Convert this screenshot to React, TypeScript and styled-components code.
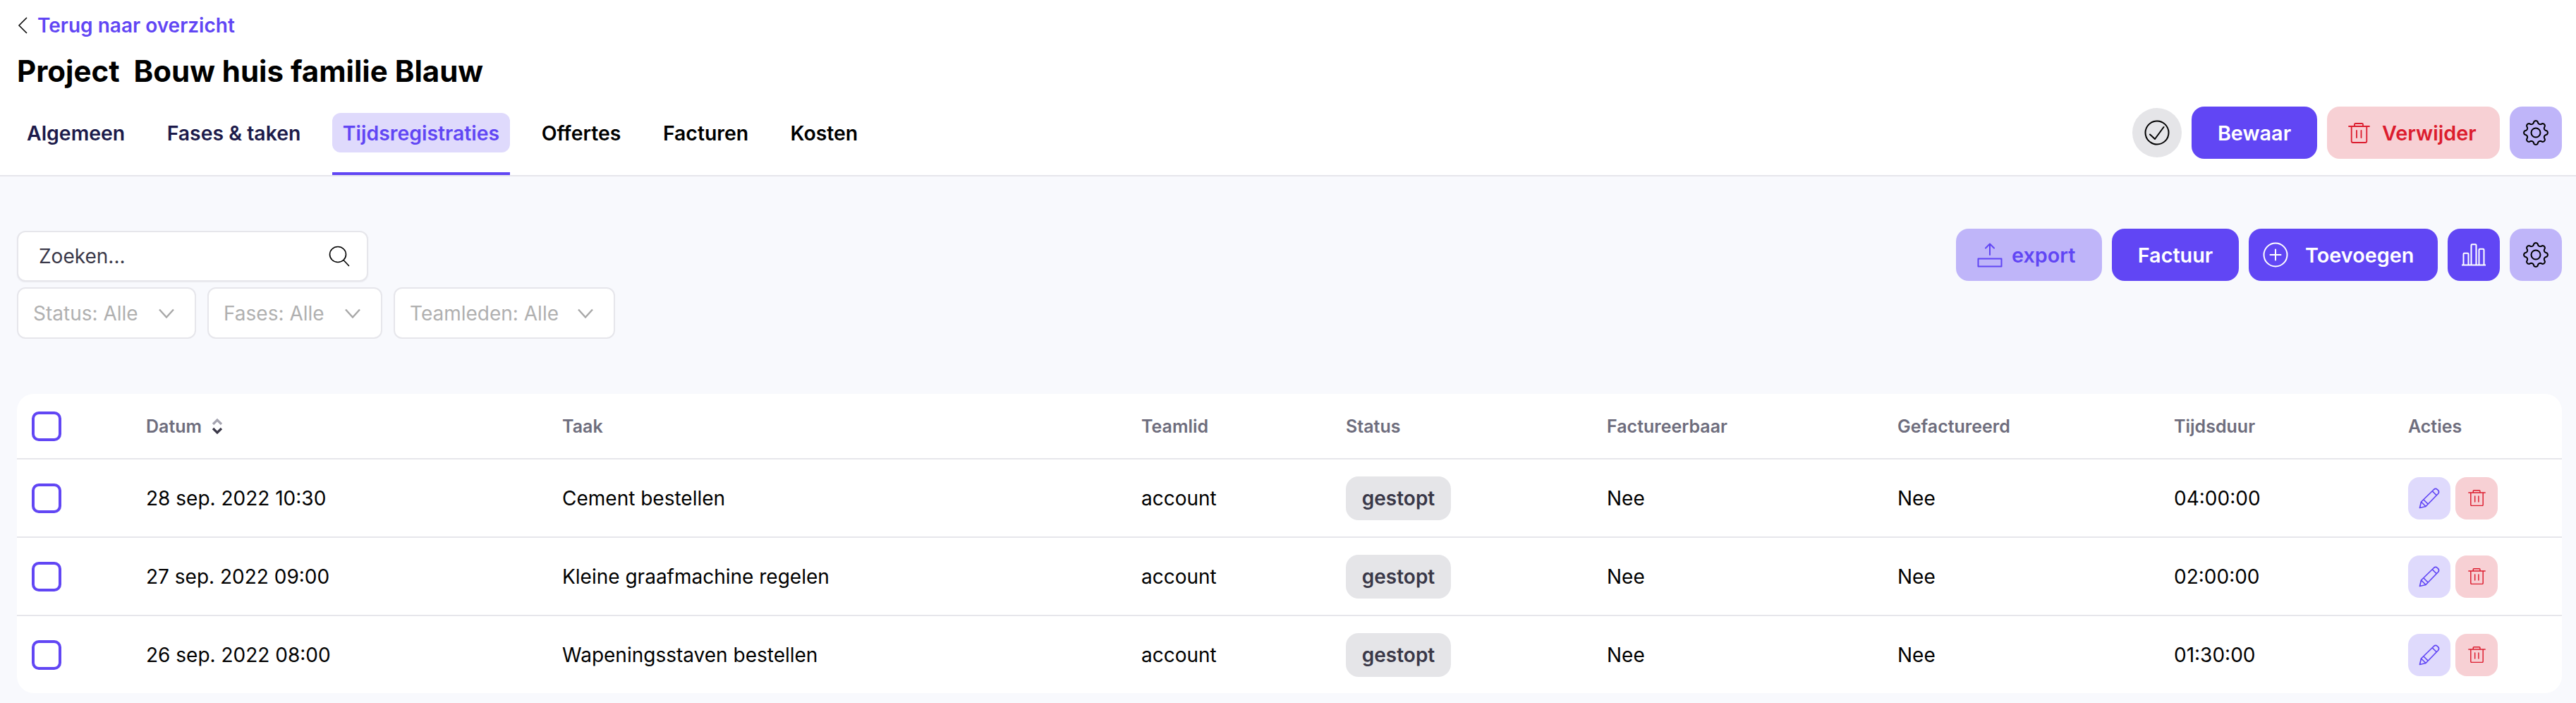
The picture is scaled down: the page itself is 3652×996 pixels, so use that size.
import React from 'react';
import styled, { createGlobalStyle } from 'styled-components';

const GlobalStyle = createGlobalStyle`
    html, body {
        margin: 0;
        padding: 0;
        background: #f8f9fd;
        font-family: Inter, "Noto Sans", sans-serif;
    }
`;

const primary = '#6146f4';
const lavender = '#bfb5f9';
const lilac = '#dfdafc';
const rose = '#f7d0d4';
const red = '#dc1c2e';
const line = '#e6e6eb';

const Page = styled.div`
    width: 3652px;
    height: 996px;
    overflow: hidden;
`;

const Header = styled.header`
    background: #fff;
    height: 248px;
    border-bottom: 2px solid ${line};
    padding: 0 20px 0 24px;
`;

const BackLink = styled.a`
    display: flex;
    align-items: center;
    gap: 13px;
    height: 36px;
    padding-top: 18px;
    color: ${primary};
    font-size: 28px;
    font-weight: 600;
`;

const Title = styled.h1`
    margin: 0;
    padding-top: 24px;
    font-size: 42px;
    line-height: 46px;
    font-weight: 700;
    color: #000;
    white-space: pre;
`;

const HeaderRow = styled.div`
    display: flex;
    justify-content: space-between;
    align-items: center;
    padding-top: 27px;
`;

const Tabs = styled.nav`
    display: flex;
    gap: 29.5px;
    margin-left: -1px;
`;

const Tab = styled.div<{ $active?: boolean; $navy?: boolean }>`
    position: relative;
    height: 56px;
    padding: 0 15px;
    display: flex;
    align-items: center;
    border-radius: 12px;
    font-size: 28.4px;
    font-weight: 600;
    background: ${p => (p.$active ? lilac : 'transparent')};
    color: ${p => (p.$active ? primary : p.$navy ? '#1c1a4a' : '#000')};

    ${p => p.$active && `
        &::after {
            content: '';
            position: absolute;
            left: 0;
            right: 0;
            top: 84px;
            height: 4px;
            background: ${primary};
        }
    `}
`;

const Actions = styled.div`
    display: flex;
    align-items: center;
    gap: 14px;
`;

const StatusDot = styled.div`
    width: 70px;
    height: 70px;
    border-radius: 50%;
    background: #e5e5e8;
    display: flex;
    align-items: center;
    justify-content: center;
`;

const Button = styled.button<{ $w: number; $bg: string; $fg: string }>`
    width: ${p => p.$w}px;
    height: 74px;
    border: 0;
    border-radius: 18px;
    padding: 0;
    display: flex;
    align-items: center;
    justify-content: center;
    font-family: inherit;
    font-size: 28.8px;
    font-weight: 600;
    background: ${p => p.$bg};
    color: ${p => p.$fg};
`;

const IconLabelButton = styled(Button)<{ $left: number; $gap: number }>`
    justify-content: flex-start;
    padding-left: ${p => p.$left}px;
    gap: ${p => p.$gap}px;
`;

const Content = styled.main`
    padding: 77px 20px 0 24px;
`;

const ToolRow = styled.div`
    display: flex;
    justify-content: space-between;
    align-items: flex-start;
`;

const FilterColumn = styled.div`
    display: flex;
    flex-direction: column;
    gap: 8px;
`;

const SearchBox = styled.div`
    box-sizing: border-box;
    width: 498px;
    height: 72px;
    background: #fff;
    border: 2px solid ${line};
    border-radius: 12px;
    padding: 0 24px 0 29px;
    display: flex;
    align-items: center;
    justify-content: space-between;
    font-size: 28px;
    color: #3a3848;
    box-shadow: 0 1px 2px rgba(20, 20, 50, 0.06);
`;

const FilterRow = styled.div`
    display: flex;
    gap: 16px;
`;

const FilterBox = styled.div<{ $w: number }>`
    box-sizing: border-box;
    width: ${p => p.$w}px;
    height: 73px;
    background: #fff;
    border: 2px solid ${line};
    border-radius: 12px;
    padding: 0 29px 0 21px;
    display: flex;
    align-items: center;
    justify-content: space-between;
    font-size: 28px;
    color: #b0b0b0;
`;

const ToolButtons = styled(Actions)`
    margin-top: -3px;
`;

const Card = styled.section`
    margin-top: 78px;
    width: 3608px;
    background: #fff;
    border-radius: 24px;
    overflow: hidden;
`;

const columns = '183px 590px 821px 290px 370px 412px 392px 332px 218px';

const HeadRow = styled.div`
    display: grid;
    grid-template-columns: ${columns};
    align-items: center;
    height: 91px;
    border-bottom: 2px solid ${line};
    font-size: 25px;
    font-weight: 600;
    color: #6e6d7d;
`;

const BodyRow = styled.div`
    display: grid;
    grid-template-columns: ${columns};
    align-items: center;
    height: 109px;
    border-bottom: 2px solid ${line};
    font-size: 28px;
    color: #000;

    &:last-child {
        border-bottom: 0;
    }
`;

const Check = styled.span`
    display: block;
    box-sizing: border-box;
    width: 42px;
    height: 42px;
    margin-left: 21px;
    border: 4px solid ${primary};
    border-radius: 10px;
`;

const SortLabel = styled.div`
    display: flex;
    align-items: center;
    gap: 14px;
`;

const Badge = styled.span`
    display: inline-flex;
    align-items: center;
    justify-content: center;
    width: 149px;
    height: 62px;
    border-radius: 18px;
    background: #e5e5e8;
    color: #3a3848;
    font-size: 28px;
    font-weight: 600;
`;

const RowActions = styled.div`
    display: flex;
    gap: 7px;
`;

const IconButton = styled.button<{ $bg: string }>`
    width: 60px;
    height: 60px;
    border: 0;
    padding: 0;
    border-radius: 16px;
    background: ${p => p.$bg};
    display: flex;
    align-items: center;
    justify-content: center;
`;

// eight rounded teeth, sampled around the circle
const gearPath = (() => {
    const points: string[] = [];
    for (let i = 0; i < 160; i++) {
        const angle = (i / 160) * Math.PI * 2 + Math.PI / 8;
        const wave = Math.cos(angle * 8);
        const shaped = Math.sign(wave) * Math.pow(Math.abs(wave), 0.6);
        const radius = 15 + 1.9 * shaped;
        points.push(`${(18 + radius * Math.cos(angle)).toFixed(2)} ${(18 + radius * Math.sin(angle)).toFixed(2)}`);
    }
    return `M${points.join('L')}Z`;
})();

const GearIcon = () => (
    <svg width="36" height="36" viewBox="0 0 36 36" fill="none" stroke="#000" strokeWidth="2" strokeLinejoin="round">
        <path d={gearPath} />
        <circle cx="18" cy="18" r="6.500" />
    </svg>
);

const TrashIcon = ({ width, color }: { width: number; color: string }) => (
    <svg width={width} height={(width * 29) / 31} viewBox="0 0 31 29" fill="none" stroke={color} strokeWidth="1.800" strokeLinecap="round" strokeLinejoin="round">
        <path d="M1 5h29M9 5V2.300c0-.8.5-1.300 1.300-1.300h9.400c.8 0 1.300.5 1.300 1.300V5M4.700 5v21c0 1.300.8 2 2 2h17.600c1.200 0 2-.7 2-2V5M12 11v10M18.500 11v10" />
    </svg>
);

const PencilIcon = () => (
    <svg width="30" height="30" viewBox="0 0 30 30" fill="none" stroke={primary} strokeWidth="1.700" strokeLinejoin="round" strokeLinecap="round">
        <path d="M1.500 28.500l2-8.500L21.500 2.500c1.500-1.300 3.500-1.300 4.800 0l1.200 1.200c1.300 1.400 1.300 3.300 0 4.800L10 26.500l-8.500 2zM3.500 20l6.500 6.500M7 17l6 6M19.500 5l5.500 5.500" />
    </svg>
);

const SearchIcon = () => (
    <svg width="30" height="30" viewBox="0 0 30 30" fill="none" stroke="#000" strokeWidth="1.600" strokeLinecap="round">
        <ellipse cx="13" cy="12.500" rx="11.500" ry="11" />
        <path d="M21 20.500l7.500 8" />
    </svg>
);

const ChevronIcon = () => (
    <svg width="22" height="14" viewBox="0 0 22 14" fill="none" stroke="#a8a8a8" strokeWidth="2.400">
        <path d="M1 1.500l10 11 10-11" />
    </svg>
);

const CheckCircleIcon = () => (
    <svg width="36" height="36" viewBox="0 0 36 36" fill="none" stroke="#000" strokeWidth="2" strokeLinecap="round" strokeLinejoin="round">
        <circle cx="18" cy="18" r="16.500" />
        <path d="M8 20.500l7 6.500L27.500 10" />
    </svg>
);

const PlusCircleIcon = () => (
    <svg width="36" height="36" viewBox="0 0 36 36" fill="none" stroke="#fff" strokeWidth="2" strokeLinecap="round">
        <circle cx="18" cy="18" r="16.500" />
        <path d="M18 10.500v15M10.500 18h15" />
    </svg>
);

const ChartIcon = () => (
    <svg width="36" height="32" viewBox="0 0 36 32" fill="none" stroke="#fff" strokeWidth="2" strokeLinejoin="round">
        <path d="M1 30.500h34M3.500 30V15c0-.8.4-1.200 1.200-1.200h4.600c.8 0 1.200.4 1.200 1.200v15M14.500 30V2.500c0-.8.4-1.200 1.200-1.200h4.600c.8 0 1.200.4 1.200 1.200V30M25.500 30V9c0-.8.4-1.200 1.200-1.200h4.600c.8 0 1.200.4 1.200 1.200v21" />
    </svg>
);

const ExportIcon = () => (
    <svg width="36" height="35" viewBox="0 0 36 35" fill="none" stroke={primary} strokeWidth="2" strokeLinecap="round" strokeLinejoin="round">
        <path d="M1.500 22.500h33v11h-33zM18 17V1.500M12 7.500l6-6 6 6" />
    </svg>
);

const SortIcon = () => (
    <svg width="16" height="24" viewBox="0 0 16 24" fill="none" strokeWidth="3.200">
        <path d="M2 9l6-6 6 6" stroke="#a5a4b0" />
        <path d="M2 15l6 6 6-6" stroke="#3a3848" />
    </svg>
);

const rows = [
    { date: '28 sep. 2022 10:30', task: 'Cement bestellen', duration: '04:00:00' },
    { date: '27 sep. 2022 09:00', task: 'Kleine graafmachine regelen', duration: '02:00:00' },
    { date: '26 sep. 2022 08:00', task: 'Wapeningsstaven bestellen', duration: '01:30:00' },
];

const App = () => (
    <Page>
        <GlobalStyle />
        <Header>
            <BackLink>
                <svg width="16" height="26" viewBox="0 0 16 26" fill="none" stroke="#000" strokeWidth="1.500">
                    <path d="M14 2L3 13l11 11" />
                </svg>
                Terug naar overzicht
            </BackLink>
            <Title>Project  Bouw huis familie Blauw</Title>
            <HeaderRow>
                <Tabs>
                    <Tab $navy>Algemeen</Tab>
                    <Tab $navy>Fases &amp; taken</Tab>
                    <Tab $active>Tijdsregistraties</Tab>
                    <Tab>Offertes</Tab>
                    <Tab>Facturen</Tab>
                    <Tab>Kosten</Tab>
                </Tabs>
                <Actions>
                    <StatusDot><CheckCircleIcon /></StatusDot>
                    <Button $w={178} $bg={primary} $fg="#fff">Bewaar</Button>
                    <IconLabelButton $w={245} $bg={rose} $fg={red} $left={30} $gap={17}>
                        <TrashIcon width={31} color={red} />
                        Verwijder
                    </IconLabelButton>
                    <Button $w={74} $bg={lavender} $fg="#000"><GearIcon /></Button>
                </Actions>
            </HeaderRow>
        </Header>
        <Content>
            <ToolRow>
                <FilterColumn>
                    <SearchBox>
                        Zoeken...
                        <SearchIcon />
                    </SearchBox>
                    <FilterRow>
                        <FilterBox $w={254}>Status: Alle <ChevronIcon /></FilterBox>
                        <FilterBox $w={248}>Fases: Alle <ChevronIcon /></FilterBox>
                        <FilterBox $w={314}>Teamleden: Alle <ChevronIcon /></FilterBox>
                    </FilterRow>
                </FilterColumn>
                <ToolButtons>
                    <IconLabelButton $w={207} $bg={lavender} $fg={primary} $left={30} $gap={13}>
                        <ExportIcon />
                        export
                    </IconLabelButton>
                    <Button $w={180} $bg={primary} $fg="#fff">Factuur</Button>
                    <IconLabelButton $w={268} $bg={primary} $fg="#fff" $left={20} $gap={24}>
                        <PlusCircleIcon />
                        Toevoegen
                    </IconLabelButton>
                    <Button $w={74} $bg={primary} $fg="#fff"><ChartIcon /></Button>
                    <Button $w={74} $bg={lavender} $fg="#000"><GearIcon /></Button>
                </ToolButtons>
            </ToolRow>
            <Card>
                <HeadRow>
                    <Check />
                    <SortLabel>Datum <SortIcon /></SortLabel>
                    <div>Taak</div>
                    <div>Teamlid</div>
                    <div>Status</div>
                    <div>Factureerbaar</div>
                    <div>Gefactureerd</div>
                    <div>Tijdsduur</div>
                    <div>Acties</div>
                </HeadRow>
                {rows.map(row => (
                    <BodyRow key={row.date}>
                        <Check />
                        <div>{row.date}</div>
                        <div>{row.task}</div>
                        <div>account</div>
                        <div><Badge>gestopt</Badge></div>
                        <div>Nee</div>
                        <div>Nee</div>
                        <div>{row.duration}</div>
                        <RowActions>
                            <IconButton $bg={lilac}><PencilIcon /></IconButton>
                            <IconButton $bg={rose}><TrashIcon width={25} color={red} /></IconButton>
                        </RowActions>
                    </BodyRow>
                ))}
            </Card>
        </Content>
    </Page>
);

export default App;
